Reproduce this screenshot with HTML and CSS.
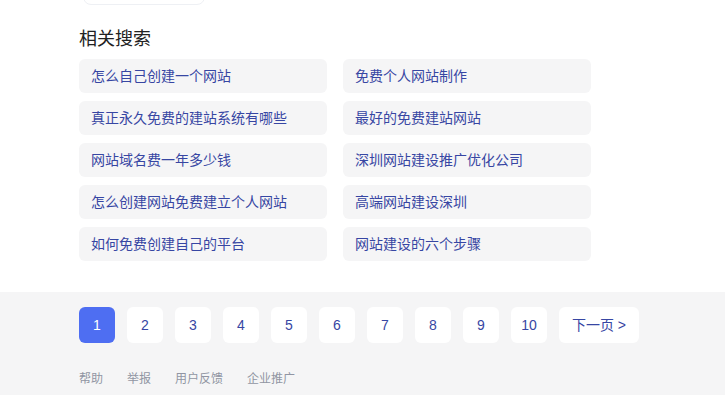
FILE: index.html
```html
<!DOCTYPE html>
<html lang="zh-CN">
<head>
    <meta charset="UTF-8">
    <meta name="viewport" content="width=device-width, initial-scale=1.0">
    <title>相关搜索</title>
    <link rel="stylesheet" href="styles.css">
</head>
<body>
    <div class="content">
        <div class="top-box"></div>

        <div class="related">
            <h3>相关搜索</h3>
            <div class="related-grid">
                <a class="rs-item" href="#">怎么自己创建一个网站</a>
                <a class="rs-item" href="#">免费个人网站制作</a>
                <a class="rs-item" href="#">真正永久免费的建站系统有哪些</a>
                <a class="rs-item" href="#">最好的免费建站网站</a>
                <a class="rs-item" href="#">网站域名费一年多少钱</a>
                <a class="rs-item" href="#">深圳网站建设推广优化公司</a>
                <a class="rs-item" href="#">怎么创建网站免费建立个人网站</a>
                <a class="rs-item" href="#">高端网站建设深圳</a>
                <a class="rs-item" href="#">如何免费创建自己的平台</a>
                <a class="rs-item" href="#">网站建设的六个步骤</a>
            </div>
        </div>
    </div>

    <div class="foot">
        <div class="pager">
            <span class="page active">1</span>
            <a class="page" href="#">2</a>
            <a class="page" href="#">3</a>
            <a class="page" href="#">4</a>
            <a class="page" href="#">5</a>
            <a class="page" href="#">6</a>
            <a class="page" href="#">7</a>
            <a class="page" href="#">8</a>
            <a class="page" href="#">9</a>
            <a class="page" href="#">10</a>
            <a class="page next" href="#">下一页 &gt;</a>
        </div>
        <div class="foot-links">
            <a href="#">帮助</a>
            <a href="#">举报</a>
            <a href="#">用户反馈</a>
            <a href="#">企业推广</a>
        </div>
    </div>
</body>
</html>
```

FILE: styles.css
```css
body {
    font-family: Arial, "Liberation Sans", "Noto Sans CJK SC", sans-serif;
    margin: 0;
    background-color: #fff;
    color: #222;
}

a {
    text-decoration: none;
}

.content {
    padding-left: 79px;
    height: 292px;
    position: relative;
}

.top-box {
    position: absolute;
    top: -20px;
    left: 83px;
    width: 120px;
    height: 23px;
    border: 1px solid #eef0f4;
    border-radius: 8px;
    background-color: #fff;
}

.related {
    padding-top: 27px;
}

.related h3 {
    margin: 0 0 8px;
    font-size: 18px;
    font-weight: normal;
    line-height: 24px;
    color: #222;
}

.related-grid {
    display: grid;
    grid-template-columns: 248px 248px;
    column-gap: 16px;
    row-gap: 8px;
}

.rs-item {
    display: block;
    height: 34px;
    line-height: 34px;
    padding: 0 12px;
    background-color: #f5f5f6;
    border-radius: 6px;
    font-size: 14px;
    color: #3746a3;
}

.foot {
    background-color: #f5f5f6;
    padding: 15px 0 0 79px;
    height: 88px;
}

.pager {
    display: flex;
    gap: 12px;
}

.page {
    width: 36px;
    height: 36px;
    line-height: 36px;
    text-align: center;
    background-color: #fff;
    border-radius: 6px;
    font-size: 14px;
    color: #3746a3;
}

.page.active {
    background-color: #4e6ef2;
    color: #fff;
}

.page.next {
    width: 80px;
}

.foot-links {
    display: flex;
    gap: 24px;
    margin-top: 26px;
    font-size: 12px;
}

.foot-links a {
    color: #9195a3;
}
```
